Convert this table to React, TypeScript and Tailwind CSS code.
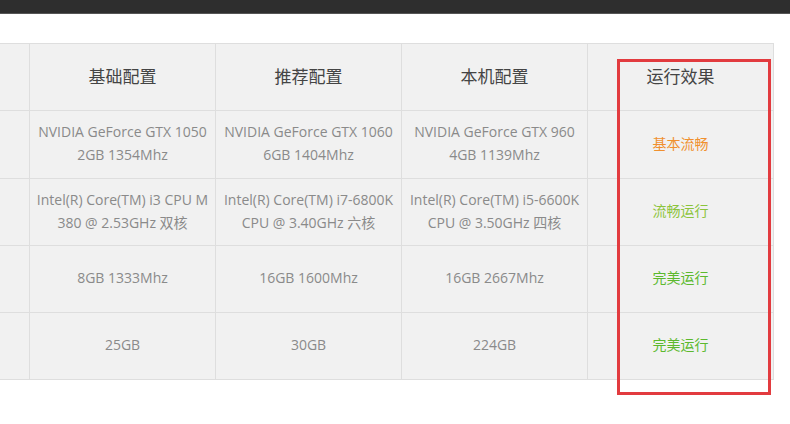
const headers = ['', '基础配置', '推荐配置', '本机配置', '运行效果']

type Row = { cells: string[][]; status: string; statusClass: string; height: string }

const rows: Row[] = [
  {
    cells: [
      ['NVIDIA GeForce GTX 1050', '2GB 1354Mhz'],
      ['NVIDIA GeForce GTX 1060', '6GB 1404Mhz'],
      ['NVIDIA GeForce GTX 960', '4GB 1139Mhz'],
    ],
    status: '基本流畅',
    statusClass: 'text-[#f0902e]',
    height: 'h-[68px]',
  },
  {
    cells: [
      ['Intel(R) Core(TM) i3 CPU M', '380 @ 2.53GHz 双核'],
      ['Intel(R) Core(TM) i7-6800K', 'CPU @ 3.40GHz 六核'],
      ['Intel(R) Core(TM) i5-6600K', 'CPU @ 3.50GHz 四核'],
    ],
    status: '流畅运行',
    statusClass: 'text-[#8cc43c]',
    height: 'h-[67px]',
  },
  {
    cells: [['8GB 1333Mhz'], ['16GB 1600Mhz'], ['16GB 2667Mhz']],
    status: '完美运行',
    statusClass: 'text-[#5cb92e]',
    height: 'h-[67px]',
  },
  {
    cells: [['25GB'], ['30GB'], ['224GB']],
    status: '完美运行',
    statusClass: 'text-[#5cb92e]',
    height: 'h-[67px]',
  },
]

const font = { fontFamily: '"Open Sans", "Noto Sans CJK SC", sans-serif' }

export default function App() {
  return (
    <div className="relative w-[790px] h-[424px] bg-white overflow-hidden" style={font}>
      {/* Top dark bar */}
      <div className="h-[14px] bg-[#2e2e2e] border-b border-[#555]"></div>

      {/* Spec table */}
      <div className="mt-[29px] w-[774px] bg-[#f1f1f1] border-t border-[#dedede]">
        <div className="grid grid-cols-[29px_186px_186px_186px_187px] h-[67px] border-b border-[#dedede]">
          {headers.map((h, i) => (
            <div
              key={i}
              className={`flex items-center justify-center text-[17px] text-[#444] ${i > 0 ? 'border-l border-[#dedede]' : ''} ${i === 4 ? 'border-r' : ''}`}
            >
              {h}
            </div>
          ))}
        </div>
        {rows.map((row, r) => (
          <div key={r} className={`grid grid-cols-[29px_186px_186px_186px_187px] border-b border-[#dedede] ${row.height}`}>
            <div></div>
            {row.cells.map((lines, c) => (
              <div
                key={c}
                className="flex flex-col items-center justify-center pb-[3px] border-l border-[#dedede] text-[14px] leading-[23px] text-[#8a8a8a] whitespace-nowrap"
              >
                {lines.map((l, k) => (
                  <span key={k}>{l}</span>
                ))}
              </div>
            ))}
            <div className={`flex items-center justify-center pb-[3px] border-l border-r border-[#dedede] text-[14px] ${row.statusClass}`}>
              {row.status}
            </div>
          </div>
        ))}
      </div>

      {/* Red highlight box */}
      <div className="absolute left-[617px] top-[59px] w-[154px] h-[336px] border-[3px] border-[#e23b3f]"></div>
    </div>
  )
}
